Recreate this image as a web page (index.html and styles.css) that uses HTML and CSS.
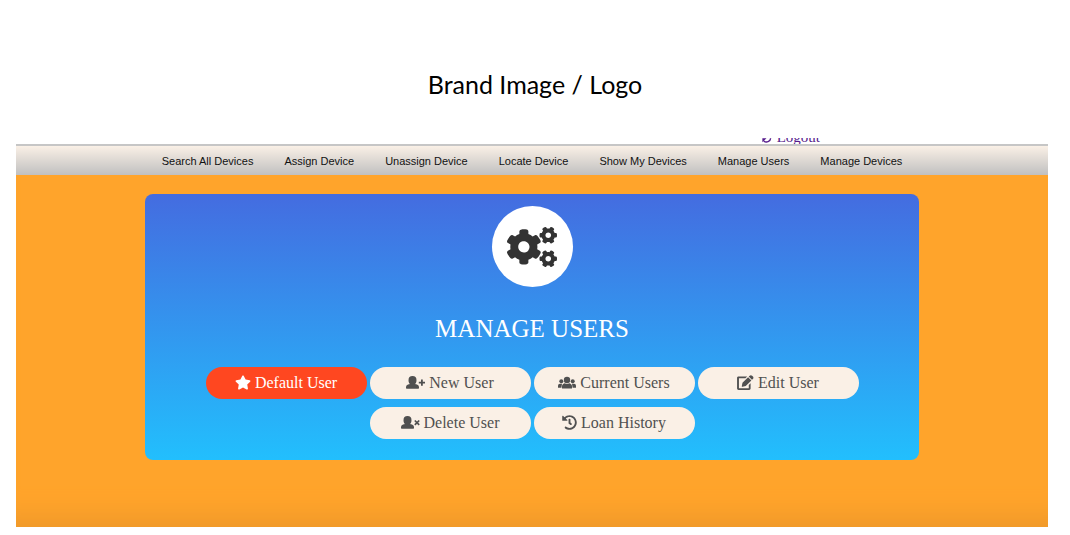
FILE: index.html
```html
<!DOCTYPE html>
<html lang="en">
<head>
<meta charset="utf-8">
<title>Manage Users</title>
<link rel="stylesheet" href="styles.css">
</head>
<body>
<header class="brand">Brand Image / Logo</header>
<div class="account">
  <a class="logout" href="#">
    <svg class="logout-icon" viewBox="0 0 16 16" aria-hidden="true"><path d="M2 7a6 6 0 0 1 10-4M14 9a6 6 0 0 1-10 4" fill="none" stroke="currentColor" stroke-width="2"/><path d="M14 1v6H8zM2 15V9h6z" fill="currentColor"/></svg>
    Logout</a>
</div>
<nav class="menu">
  <a href="#">Search All Devices</a>
  <a href="#">Assign Device</a>
  <a href="#">Unassign Device</a>
  <a href="#">Locate Device</a>
  <a href="#">Show My Devices</a>
  <a href="#">Manage Users</a>
  <a href="#">Manage Devices</a>
</nav>
<main class="stage">
  <section class="panel">
    <div class="badge">
      <svg class="cogs" viewBox="0 0 640 512" aria-hidden="true">
        <path id="cog" fill-rule="evenodd" d="M512.1 191l-8.2 14.3c-3 5.3-9.4 7.5-15.1 5.4-11.8-4.4-22.6-10.7-32.1-18.6-4.6-3.8-5.8-10.5-2.8-15.7l8.2-14.3c-6.9-8-12.3-17.3-15.9-27.4h-16.5c-6 0-11.2-4.3-12.2-10.3-2-12-2.1-24.6 0-37.1 1-6 6.2-10.4 12.2-10.4h16.5c3.6-10.1 9-19.4 15.9-27.4l-8.2-14.3c-3-5.2-1.9-11.9 2.8-15.7 9.5-7.9 20.4-14.2 32.1-18.6 5.7-2.1 12.1.1 15.1 5.4l8.2 14.3c10.5-1.9 21.2-1.9 31.7 0L552 6.3c3-5.3 9.4-7.5 15.1-5.4 11.8 4.4 22.6 10.7 32.1 18.6 4.6 3.8 5.8 10.5 2.8 15.7l-8.2 14.3c6.9 8 12.3 17.3 15.9 27.4h16.5c6 0 11.2 4.3 12.2 10.3 2 12 2.1 24.6 0 37.1-1 6-6.2 10.4-12.2 10.4h-16.5c-3.6 10.1-9 19.4-15.9 27.4l8.2 14.3c3 5.2 1.9 11.9-2.8 15.7-9.5 7.9-20.4 14.2-32.1 18.6-5.7 2.1-12.1-.1-15.1-5.4l-8.2-14.3c-10.4 1.9-21.2 1.9-31.7 0zm-10.5-58.8c38.5 29.6 82.4-14.3 52.8-52.8-38.5-29.7-82.4 14.3-52.8 52.8z"/>
        <use href="#cog" y="301"/>
        <path fill-rule="evenodd" d="M386.3 286.1l33.7 16.8c10.1 5.8 14.5 18.1 10.5 29.1-8.9 24.2-26.4 46.4-42.6 65.8-7.4 8.9-20.2 11.1-30.3 5.3l-29.1-16.8c-16 13.7-34.6 24.6-54.9 31.7v33.6c0 11.6-8.3 21.6-19.7 23.6-24.6 4.2-50.4 4.4-75.9 0-11.5-2-20-11.9-20-23.6V418c-20.3-7.2-38.9-18-54.9-31.7L74 403c-10 5.8-22.9 3.6-30.3-5.3-16.2-19.4-33.3-41.6-42.2-65.7-4-10.9.4-23.2 10.5-29.1l33.3-16.8c-3.9-20.9-3.9-42.4 0-63.4L12 205.8c-10.1-5.8-14.6-18.1-10.5-29 8.9-24.2 26-46.4 42.2-65.8 7.4-8.9 20.2-11.1 30.3-5.3l29.1 16.8c16-13.7 34.6-24.6 54.9-31.7V57.1c0-11.5 8.2-21.5 19.6-23.5 24.6-4.2 50.5-4.4 76-.1 11.5 2 20 11.9 20 23.6v33.6c20.3 7.2 38.9 18 54.9 31.7l29.1-16.8c10-5.8 22.9-3.6 30.3 5.3 16.2 19.4 33.2 41.6 42.1 65.8 4 10.9.1 23.2-10 29.1l-33.7 16.8c3.9 21 3.9 42.5 0 63.5zm-117.6 21.1c59.2-77-28.7-164.9-105.7-105.7-59.2 77 28.7 164.9 105.7 105.7z"/>
      </svg>
    </div>
    <h1 class="title">MANAGE USERS</h1>
    <div class="actions">
      <button class="action active" type="button">
        <svg width="16" height="15" viewBox="0 0 576 512" aria-hidden="true"><path d="M259.3 17.8L194 150.2 47.9 171.5c-26.2 3.8-36.7 36.1-17.7 54.6l105.7 103-25 145.5c-4.5 26.3 23.2 46 46.4 33.7L288 439.6l130.7 68.7c23.2 12.2 50.9-7.4 46.4-33.7l-25-145.5 105.7-103c19-18.5 8.5-50.8-17.7-54.6L382 150.2 316.7 17.8c-11.7-23.6-45.6-23.9-57.4 0z"/></svg>
        Default User</button>
      <button class="action" type="button">
        <svg width="19" height="16" viewBox="0 0 19 16" aria-hidden="true"><path d="M6.5 1a4 4.200 0 0 1 4 4.200c0 1.800-.6 3-1.500 3.900l2 .5q2 .5 2 2.500v1q0 .7-.7.700H.7q-.7 0-.7-.7v-1q0-2 2-2.500l2-.5c-.9-.9-1.500-2.100-1.500-3.900a4 4.200 0 0 1 4-4.200z"/><path d="M15 4.500h1.800v2.200H19v1.800h-2.200v2.200H15V8.500h-2.200V6.700H15z"/></svg>
        New User</button>
      <button class="action" type="button">
        <svg width="18" height="16" viewBox="0 0 18 16" aria-hidden="true"><circle cx="3.300" cy="6.300" r="2"/><circle cx="14.700" cy="6.300" r="2"/><path d="M0 12.800v-2q0-2 2-2h2l-.6 4zM18 12.800v-2q0-2-2-2h-2l.6 4z"/><circle cx="9" cy="5" r="3.200"/><path d="M4 13.600v-2q0-2.700 2.700-3.300a4 4 0 0 0 4.600 0q2.700.6 2.700 3.300v2z"/></svg>
        Current Users</button>
      <button class="action" type="button">
        <svg width="17" height="15" viewBox="0 0 576 512" aria-hidden="true"><path d="M400 340l62-62v186c0 26.500-21.500 48-48 48H48c-26.500 0-48-21.500-48-48V98c0-26.500 21.500-48 48-48h298l-62 62H64v336h336zM488 187L296.300 378.700l-110 24c-18 3-28-8-25-25l24-110L377 75zM397 55l33-33c23-23 60-23 83 0l28 28c23 23 23 60 0 83l-33 33z"/></svg>
        Edit User</button>
      <button class="action" type="button">
        <svg width="19" height="16" viewBox="0 0 19 16" aria-hidden="true"><path d="M6.500 1a4 4.200 0 0 1 4 4.200c0 1.800-.6 3-1.500 3.900l2 .5q2 .5 2 2.500v1q0 .7-.7.700H.7q-.7 0-.7-.7v-1q0-2 2-2.500l2-.5c-.9-.9-1.500-2.100-1.500-3.900a4 4.200 0 0 1 4-4.200z"/><path d="M13.800 5.500l4.400 4.400M18.200 5.500l-4.400 4.400" stroke="currentColor" stroke-width="1.700"/></svg>
        Delete User</button>
      <button class="action" type="button">
        <svg width="15" height="15" viewBox="0 0 512 512" aria-hidden="true"><path fill-rule="evenodd" d="M504 255.500c.3 136.600-111.200 248.400-247.800 248.500-59 0-113.200-20.500-155.800-54.900-11.100-8.900-11.900-25.500-1.800-35.600l11.300-11.300c8.600-8.600 22.400-9.600 31.900-2C173.100 425.100 212.800 440 256 440c101.700 0 184-82.300 184-184 0-101.700-82.300-184-184-184-48.800 0-93.100 19-126.100 49.900l50.800 50.800c10.100 10.100 2.900 27.300-11.300 27.300H24c-8.800 0-16-7.200-16-16V38.600c0-14.300 17.200-21.400 27.300-11.300l49.400 49.400C129.200 34.100 189.600 8 256 8c136.800 0 247.700 110.800 248 247.500zm-180.900 78.800l9.800-12.600c8.100-10.500 6.300-25.500-4.200-33.700L288 256.300V152c0-13.300-10.700-24-24-24h-16c-13.300 0-24 10.700-24 24v135.700l65.400 50.900c10.500 8.100 25.500 6.300 33.700-4.200z"/></svg>
        Loan History</button>
    </div>
  </section>
</main>
</body>
</html>
```
FILE: styles.css
```css
* {
  box-sizing: border-box;
}

body {
  margin: 0;
  padding: 0 22px 8px 16px;
  background: #fff;
  font-family: "Liberation Serif", serif;
}

.brand {
  padding: 67px 0 37px 6px;
  color: #000;
  font: 25px/34px Lato, sans-serif;
  text-align: center;
}

.account {
  display: flex;
  justify-content: flex-end;
  align-items: flex-end;
  height: 6px;
  padding-right: 228px;
  overflow: hidden;
}

.logout {
  display: flex;
  align-items: center;
  gap: 4px;
  color: #551a8b;
  font-size: 15px;
  line-height: 14px;
  text-decoration: none;
}

.logout-icon {
  width: 13px;
  height: 11px;
}

.menu {
  display: flex;
  justify-content: center;
  gap: 31px;
  border-top: 2px solid #c6c6c6;
  padding: 8px 0 7px;
  background: linear-gradient(#faf0e6, #c0c0c0);
  font: 11px/14px "Liberation Sans", sans-serif;
}

.menu a {
  color: #111;
  text-decoration: none;
  white-space: nowrap;
}

.stage {
  padding: 19px 0 67px;
  background: #ffa42b;
  box-shadow: inset 0 -36px 26px -26px #ee982a;
}

.panel {
  width: 75%;
  margin: 0 auto;
  padding: 12px 20px 21px;
  border-radius: 8px;
  background: linear-gradient(#446ce0, #22bffd);
}

.badge {
  display: flex;
  align-items: center;
  justify-content: center;
  width: 81px;
  height: 81px;
  margin: 0 auto;
  border-radius: 50%;
  background: #fff;
}

.cogs {
  width: 50px;
  height: 40px;
  fill: #333;
}

.title {
  margin: 27px 0 23px;
  color: #fff;
  font-size: 25px;
  font-weight: 400;
  line-height: 30px;
  text-align: center;
}

.actions {
  display: flex;
  flex-wrap: wrap;
  justify-content: center;
  gap: 8px 3px;
}

.action {
  display: flex;
  align-items: center;
  justify-content: center;
  gap: 4px;
  width: 161px;
  padding: 6px 0 7px;
  border: 0;
  border-radius: 17px;
  background: #faf0e6;
  color: #505050;
  font: 16px/19px "Liberation Serif", serif;
}

.action svg {
  fill: currentColor;
}

.action.active {
  background: #ff4720;
  color: #fff;
}
```
